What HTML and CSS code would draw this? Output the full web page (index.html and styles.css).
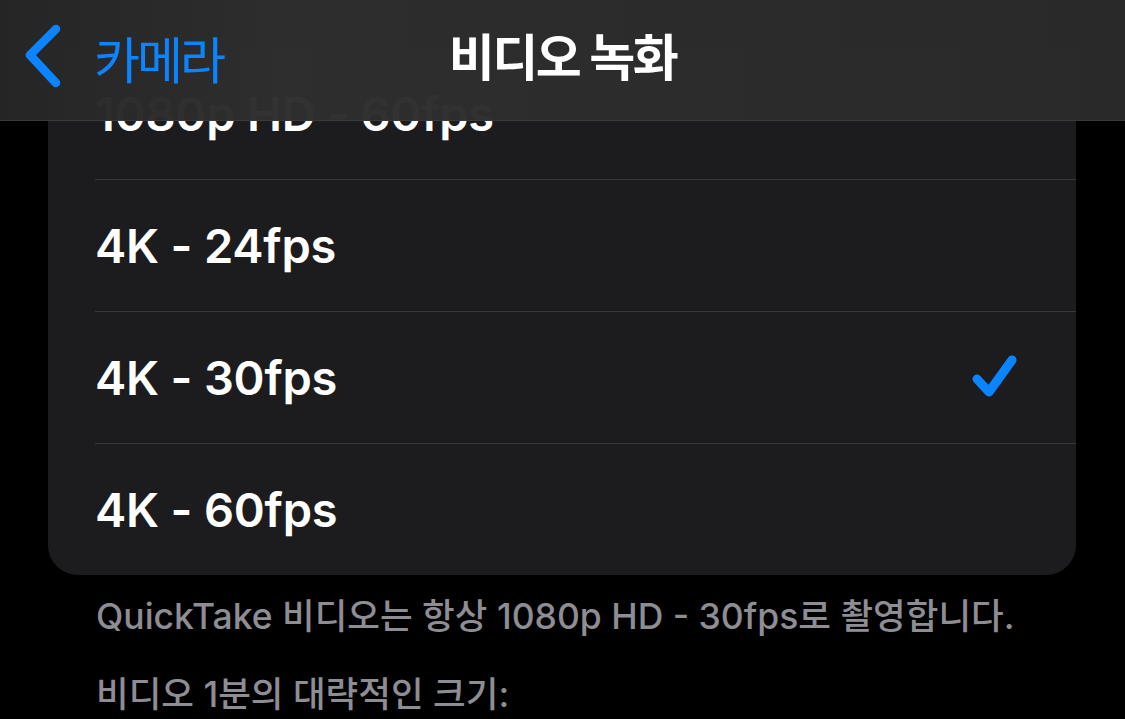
FILE: index.html
```html
<!DOCTYPE html>
<html lang="ko">
<head>
    <meta charset="UTF-8">
    <meta name="viewport" content="width=device-width, initial-scale=1.0">
    <title>비디오 녹화</title>
    <link rel="stylesheet" href="styles.css">
</head>
<body>
    <!-- Navigation bar, sits over the scrolled list -->
    <header class="nav-bar">
        <a class="back-link" href="#">
            <svg class="back-chevron" width="44" height="68" viewBox="0 0 44 68">
                <path d="M34 6 L8 32 L34 60" fill="none" stroke="#0a84ff" stroke-width="8.5" stroke-linecap="round" stroke-linejoin="round"/>
            </svg>
            <span>카메라</span>
        </a>
        <h1 class="nav-title">비디오 녹화</h1>
    </header>

    <main class="content">
        <ul class="option-list">
            <li class="option"><div class="option-body">1080p HD - 60fps</div></li>
            <li class="option"><div class="option-body">4K - 24fps</div></li>
            <li class="option selected">
                <div class="option-body">
                    4K - 30fps
                    <svg class="check" width="56" height="56" viewBox="0 0 56 56">
                        <path d="M11 29 L23 42 L46 10" fill="none" stroke="#0a84ff" stroke-width="9" stroke-linecap="round" stroke-linejoin="round"/>
                    </svg>
                </div>
            </li>
            <li class="option"><div class="option-body">4K - 60fps</div></li>
        </ul>

        <p class="footer-note">QuickTake 비디오는 항상 1080p HD - 30fps로 촬영합니다.</p>
        <p class="footer-note">비디오 1분의 대략적인 크기:</p>
    </main>
</body>
</html>
```

FILE: styles.css
```css
/* Dark settings screen */
body {
    margin: 0;
    height: 719px;
    overflow: hidden;
    background-color: #000;
    color: #fff;
    font-family: Inter, "Noto Sans CJK KR", sans-serif;
}

.nav-bar {
    position: absolute;
    top: 0;
    left: 0;
    right: 0;
    height: 121px;
    padding-bottom: 12px;
    display: flex;
    align-items: center;
    justify-content: center;
    background: linear-gradient(90deg, rgba(38, 38, 38, 0.98), rgba(46, 46, 46, 0.98) 25%, rgba(42, 42, 42, 0.98));
    border-bottom: 1px solid #3a3a3c;
    box-sizing: border-box;
    z-index: 2;
}

.back-link {
    position: absolute;
    left: 22px;
    top: 21px;
    display: flex;
    align-items: center;
    gap: 28px;
    color: #0a84ff;
    text-decoration: none;
    font-size: 50px;
    letter-spacing: -3px;
}

.back-chevron {
    flex-shrink: 0;
}

.nav-title {
    margin: 0;
    font-size: 50px;
    font-weight: 600;
    letter-spacing: -2.5px;
}

.content {
    padding-top: 48px;
}

.option-list {
    list-style: none;
    margin: 0 49px 0 48px;
    padding: 0;
    background-color: #1c1c1e;
    border-radius: 0 0 30px 30px;
}

.option {
    padding-left: 47px;
}

.option-body {
    height: 131px;
    display: flex;
    align-items: center;
    justify-content: space-between;
    padding-right: 54px;
    border-bottom: 1px solid #38383a;
    font-size: 47px;
    font-weight: 600;
    letter-spacing: -0.2px;
}

.option:last-child .option-body {
    border-bottom: none;
}

.footer-note {
    margin: 0 0 0 96px;
    color: #8d8d93;
    font-size: 35.5px;
    font-weight: 500;
}

.footer-note:first-of-type {
    margin-top: 13px;
}

.footer-note + .footer-note {
    margin-top: 27px;
}
```
